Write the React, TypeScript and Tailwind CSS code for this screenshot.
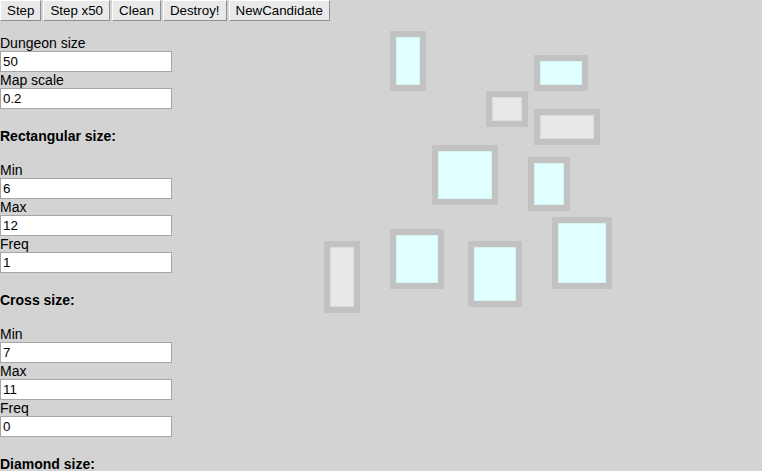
import React from "react"

// salas geradas (posição em px relativa ao canvas)
const rooms = [
  { x: 218, y: 9, w: 36, h: 60, kind: "room" },
  { x: 362, y: 33, w: 54, h: 36, kind: "room" },
  { x: 314, y: 69, w: 42, h: 36, kind: "candidate" },
  { x: 362, y: 87, w: 66, h: 36, kind: "candidate" },
  { x: 260, y: 123, w: 66, h: 60, kind: "room" },
  { x: 356, y: 135, w: 42, h: 54, kind: "room" },
  { x: 152, y: 219, w: 36, h: 72, kind: "candidate" },
  { x: 218, y: 207, w: 54, h: 60, kind: "room" },
  { x: 296, y: 219, w: 54, h: 66, kind: "room" },
  { x: 380, y: 195, w: 60, h: 72, kind: "room" },
]

const buttons = ["Step", "Step x50", "Clean", "Destroy!", "NewCandidate"]

function Field({ label, value }: { label: string; value: string }) {
  return (
    <div>
      <div className="leading-[16px]">{label}</div>
      <input
        type="text"
        defaultValue={value}
        className="block w-[172px] h-[21px] bg-white border border-[#a6a6a6] px-[2px] text-[13.33px] text-black outline-none"
      />
    </div>
  )
}

function Section({ title, min, max, freq }: { title: string; min: string; max: string; freq: string }) {
  return (
    <div>
      <h4 className="font-bold leading-[16px] my-[18.6px]">{title}</h4>
      <Field label="Min" value={min} />
      <Field label="Max" value={max} />
      <Field label="Freq" value={freq} />
    </div>
  )
}

export default function App() {
  return (
    <div className="min-h-screen bg-[#d3d3d3] text-black text-[14px] overflow-hidden" style={{ fontFamily: '"Liberation Sans", Arial, sans-serif' }}>
      <div className="flex gap-[2px] h-[22px]">
        {buttons.map(b => (
          <button
            key={b}
            className="h-[21px] px-[6px] bg-[#e9e9e9] text-[13.33px] text-black border border-t-white border-l-white border-r-[#8f8f8f] border-b-[#8f8f8f]"
          >
            {b}
          </button>
        ))}
      </div>

      <div className="flex">
        <div className="w-[172px] pt-[13px] shrink-0">
          <Field label="Dungeon size" value="50" />
          <Field label="Map scale" value="0.2" />
          <Section title="Rectangular size:" min="6" max="12" freq="1" />
          <Section title="Cross size:" min="7" max="11" freq="0" />
          <h4 className="font-bold leading-[16px] my-[18.6px]">Diamond size:</h4>
        </div>

        <div className="relative flex-1">
          {rooms.map((r, i) => (
            <div
              key={i}
              className="absolute border-[6px] border-[#c2c2c2]"
              style={{ left: r.x, top: r.y, width: r.w, height: r.h }}
            >
              <div
                className={`w-full h-full border ${
                  r.kind === "room" ? "bg-[#e0ffff] border-[#d6f2f2]" : "bg-[#e8e8e8] border-[#dcdcdc]"
                }`}
              />
            </div>
          ))}
        </div>
      </div>
    </div>
  )
}
